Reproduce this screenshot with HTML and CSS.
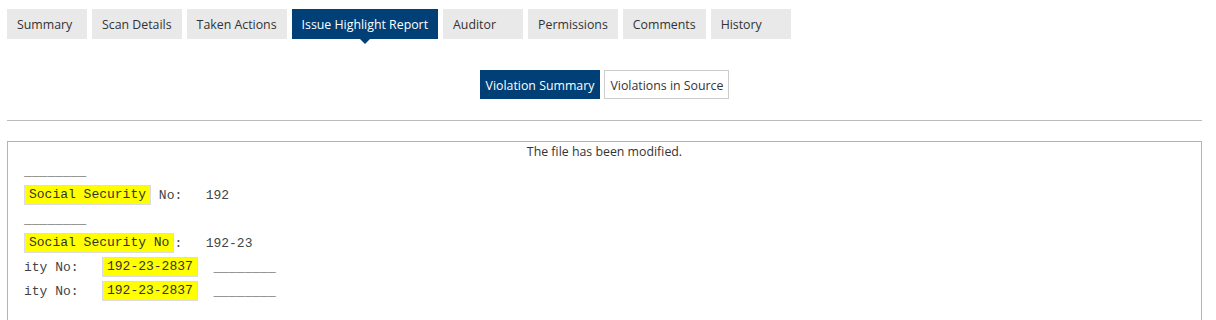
FILE: index.html
```html
<!DOCTYPE html>
<html>
<head>
<meta charset="utf-8">
<link rel="stylesheet" href="styles.css">
</head>
<body>
<div class="page">
  <nav class="tabs">
    <div class="tab">Summary</div>
    <div class="tab">Scan Details</div>
    <div class="tab">Taken Actions</div>
    <div class="tab active">Issue Highlight Report</div>
    <div class="tab">Auditor</div>
    <div class="tab">Permissions</div>
    <div class="tab">Comments</div>
    <div class="tab">History</div>
  </nav>
  <div class="switch">
    <div class="sbtn on">Violation Summary</div>
    <div class="sbtn">Violations in Source</div>
  </div>
  <hr class="rule">
  <div class="viewer">
    <div class="notice">The file has been modified.</div>
    <div class="src">
      <div class="row">________</div>
      <div class="row"><span class="hl">Social Security</span> No:   192</div>
      <div class="row">________</div>
      <div class="row"><span class="hl">Social Security No</span>:   192-23</div>
      <div class="row">ity No:   <span class="hl">192-23-2837</span>  ________</div>
      <div class="row">ity No:   <span class="hl">192-23-2837</span>  ________</div>
    </div>
  </div>
</div>
</body>
</html>
```
FILE: styles.css
```css
html, body { margin: 0; padding: 0; background: #fff; }
body { font-family: "Segoe UI", "Open Sans", sans-serif; font-size: 12.35px; color: #333; }
.page { margin: 0 14px 0 7px; padding-top: 9px; }
.tabs { display: flex; gap: 5px; }
.tab {
  position: relative;
  min-width: 80px; box-sizing: border-box;
  height: 30px; line-height: 31px;
  padding: 0 10px;
  background: #e9e9e9; color: #333;
  white-space: nowrap;
}
.tab.active { background: #004077; color: #fff; }
.tab.active::after {
  content: ""; position: absolute; left: 50%; top: 100%;
  margin-left: -5px;
  border-left: 5px solid transparent; border-right: 5px solid transparent;
  border-top: 5px solid #004077;
}
.switch { display: flex; justify-content: center; gap: 4px; margin-top: 31px; }
.sbtn {
  height: 29px; line-height: 29px; box-sizing: border-box;
  padding: 0 5px; border: 1px solid #ccc; background: #fff; color: #333;
  white-space: nowrap;
}
.sbtn.on { background: #004077; border-color: #004077; color: #fff; }
.rule { border: 0; border-top: 1px solid #bbb; margin: 21px 0 0 0; height: 0; }
.viewer { margin-top: 20px; border: 1px solid #b4b4b4; min-height: 220px; padding: 0 16px; }
.notice { text-align: center; height: 18px; line-height: 18px; padding-top: 1px; color: #333; }
.src { font-family: "Liberation Mono", "Courier New", monospace; font-size: 13px; color: #444; }
.row { display: flex; align-items: center; height: 20px; margin-bottom: 4px; white-space: pre; }
.hl {
  display: inline-block; box-sizing: border-box; height: 20px; line-height: 18px;
  padding: 0 4px; background: #ffff00; border: 1px solid #dadbe4; color: #333;
}
```
